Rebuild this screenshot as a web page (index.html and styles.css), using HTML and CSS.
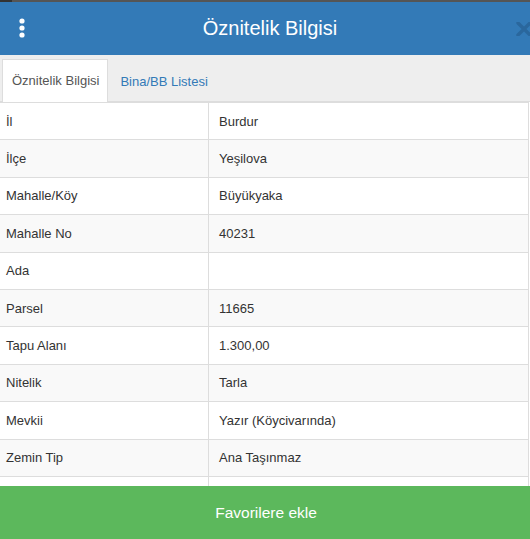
FILE: index.html
```html
<!DOCTYPE html>
<html lang="tr">
<head>
  <meta charset="UTF-8">
  <meta name="viewport" content="width=device-width, initial-scale=1.0">
  <title>Öznitelik Bilgisi</title>
  <link rel="stylesheet" href="styles.css">
</head>
<body>
  <div class="topstrip"><span class="seg"></span></div>

  <!-- Başlık -->
  <div class="header">
    <span class="menu">
      <svg width="10" height="22" viewBox="0 0 10 22">
        <circle cx="5" cy="4" r="2.6" fill="#fff"/>
        <circle cx="5" cy="11" r="2.6" fill="#fff"/>
        <circle cx="5" cy="18" r="2.6" fill="#fff"/>
      </svg>
    </span>
    <h1>Öznitelik Bilgisi</h1>
    <span class="close">
      <svg width="16" height="14" viewBox="0 0 16 14">
        <path d="M2 1 L14 13 M14 1 L2 13" stroke="#2a679d" stroke-width="3.4" stroke-linecap="round"/>
      </svg>
    </span>
  </div>

  <!-- Sekmeler -->
  <div class="tabs">
    <a class="tab active">Öznitelik Bilgisi</a>
    <a class="tab">Bina/BB Listesi</a>
  </div>

  <!-- Öznitelik tablosu -->
  <div class="content">
    <table class="attr">
      <tr><td>İl</td><td>Burdur</td></tr>
      <tr><td>İlçe</td><td>Yeşilova</td></tr>
      <tr><td>Mahalle/Köy</td><td>Büyükyaka</td></tr>
      <tr><td>Mahalle No</td><td>40231</td></tr>
      <tr><td>Ada</td><td></td></tr>
      <tr><td>Parsel</td><td>11665</td></tr>
      <tr><td>Tapu Alanı</td><td>1.300,00</td></tr>
      <tr><td>Nitelik</td><td>Tarla</td></tr>
      <tr><td>Mevkii</td><td>Yazır (Köycivarında)</td></tr>
      <tr><td>Zemin Tip</td><td>Ana Taşınmaz</td></tr>
      <tr><td>&nbsp;</td><td></td></tr>
    </table>
  </div>

  <button class="fav">Favorilere ekle</button>
</body>
</html>
```

FILE: styles.css
```css
/* Genel */
body {
  font-family: 'Liberation Sans', Arial, sans-serif;
  font-size: 13px;
  color: #333;
  margin: 0;
  height: 539px;
  overflow: hidden;
  position: relative;
  background-color: #fff;
}

.topstrip {
  height: 2px;
  background-color: #555;
}

.topstrip .seg {
  display: block;
  width: 12px;
  height: 2px;
  background-color: #333;
}

/* Başlık */
.header {
  background-color: #337ab7;
  height: 53px;
  display: flex;
  align-items: center;
  justify-content: center;
  position: relative;
}

.header h1 {
  margin: 0;
  color: #fff;
  font-size: 20px;
  font-weight: normal;
  padding-left: 10px;
}

.menu {
  position: absolute;
  left: 17px;
  top: 15px;
}

.close {
  position: absolute;
  right: -2px;
  top: 20px;
  line-height: 0;
}

/* Sekmeler */
.tabs {
  background-color: #eee;
  border-bottom: 1px solid #ddd;
  height: 46px;
  display: flex;
  align-items: flex-end;
  padding-left: 2px;
}

.tab {
  display: block;
  height: 41px;
  line-height: 41px;
  padding: 0 8px 0 9px;
  margin-right: 2px;
  color: #337ab7;
  margin-bottom: -1px;
  border: 1px solid transparent;
  border-bottom: none;
}

.tab.active {
  background-color: #fff;
  color: #555;
  border-color: #ddd;
  height: 42px;
}

/* Tabla */
.attr {
  width: 529px;
  border-collapse: collapse;
  border: 1px solid #ddd;
  border-left: none;
}

.attr td {
  border: 1px solid #ddd;
  padding: 0 10px;
  height: 36.4px;
  vertical-align: middle;
}

.attr td:first-child {
  width: 192px;
  padding-left: 6px;
  border-left: none;
}

.attr tr:nth-child(even) {
  background-color: #f9f9f9;
}

/* Botón favoriler */
.fav {
  position: absolute;
  left: 0;
  right: 0;
  bottom: 0;
  height: 53px;
  width: 100%;
  border: none;
  padding-left: 8px;
  background-color: #5cb85c;
  color: #fff;
  font-family: 'Liberation Sans', Arial, sans-serif;
  font-size: 15.5px;
}
```
